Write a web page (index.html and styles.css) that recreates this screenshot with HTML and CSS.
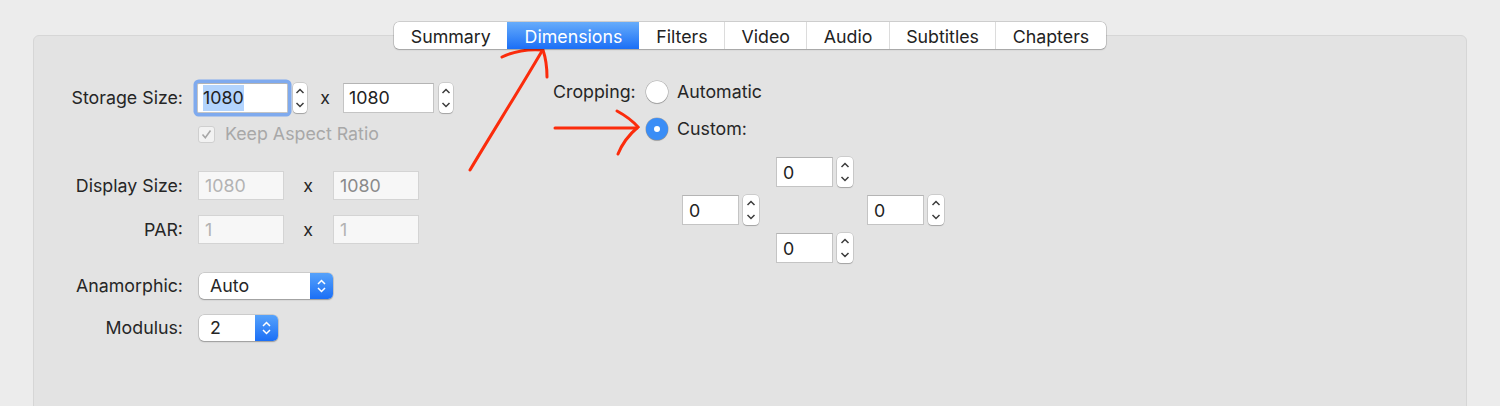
FILE: index.html
```html
<!DOCTYPE html>
<html lang="en">
<head>
    <meta charset="UTF-8">
    <title>Dimensions</title>
    <link rel="stylesheet" href="styles.css">
</head>
<body>

<div id="window">
    <nav class="tabs">
        <span class="tab">Summary</span>
        <span class="tab tab-active">Dimensions</span>
        <span class="tab">Filters</span>
        <span class="tab">Video</span>
        <span class="tab">Audio</span>
        <span class="tab">Subtitles</span>
        <span class="tab">Chapters</span>
    </nav>

    <section class="panel">
        <div class="sizes">
            <div class="row row-storage">
                <span class="label">Storage Size:</span>
                <span class="field field-focus"><span class="selection">1080</span></span>
                <span class="stepper"><svg width="14" height="30" viewBox="0 0 14 30"><path d="M3.5 10 L7 6.5 L10.5 10 M3.5 20 L7 23.5 L10.5 20"/></svg></span>
                <span class="times">x</span>
                <span class="field">1080</span>
                <span class="stepper"><svg width="14" height="30" viewBox="0 0 14 30"><path d="M3.5 10 L7 6.5 L10.5 10 M3.5 20 L7 23.5 L10.5 20"/></svg></span>
            </div>
            <div class="row row-keep">
                <span class="label"></span>
                <span class="checkbox"><svg width="17" height="17" viewBox="0 0 17 17"><path d="M4.5 8.5 L7.3 11.8 L12.5 4.5"/></svg></span>
                <span class="muted">Keep Aspect Ratio</span>
            </div>
            <div class="row row-display">
                <span class="label">Display Size:</span>
                <span class="field field-off">1080</span>
                <span class="times times-wide">x</span>
                <span class="field field-off field-dim">1080</span>
            </div>
            <div class="row row-par">
                <span class="label">PAR:</span>
                <span class="field field-off">1</span>
                <span class="times times-wide">x</span>
                <span class="field field-off">1</span>
            </div>
            <div class="row row-anamorphic">
                <span class="label">Anamorphic:</span>
                <span class="popup">
                    <span class="popup-value">Auto</span>
                    <span class="popup-arrows"><svg width="23" height="26" viewBox="0 0 23 26"><path d="M8 11 L11.5 7.5 L15 11 M8 15 L11.5 18.5 L15 15"/></svg></span>
                </span>
            </div>
            <div class="row row-modulus">
                <span class="label">Modulus:</span>
                <span class="popup popup-small">
                    <span class="popup-value">2</span>
                    <span class="popup-arrows"><svg width="23" height="26" viewBox="0 0 23 26"><path d="M8 11 L11.5 7.5 L15 11 M8 15 L11.5 18.5 L15 15"/></svg></span>
                </span>
            </div>
        </div>

        <div class="cropping">
            <div class="crop-row">
                <span class="crop-label">Cropping:</span>
                <span class="radio"></span>
                <span>Automatic</span>
            </div>
            <div class="crop-row crop-row-custom">
                <span class="crop-label"></span>
                <span class="radio radio-on"></span>
                <span>Custom:</span>
            </div>
            <div class="crop-grid">
                <div class="spin spin-top">
                    <span class="field field-crop">0</span>
                    <span class="stepper stepper-crop"><svg width="16" height="30" viewBox="0 0 16 30"><path d="M4.5 10 L8 6.5 L11.5 10 M4.5 20 L8 23.5 L11.5 20"/></svg></span>
                </div>
                <div class="spin spin-left">
                    <span class="field field-crop">0</span>
                    <span class="stepper stepper-crop"><svg width="16" height="30" viewBox="0 0 16 30"><path d="M4.5 10 L8 6.5 L11.5 10 M4.5 20 L8 23.5 L11.5 20"/></svg></span>
                </div>
                <div class="spin spin-right">
                    <span class="field field-crop">0</span>
                    <span class="stepper stepper-crop"><svg width="16" height="30" viewBox="0 0 16 30"><path d="M4.5 10 L8 6.5 L11.5 10 M4.5 20 L8 23.5 L11.5 20"/></svg></span>
                </div>
                <div class="spin spin-bottom">
                    <span class="field field-crop">0</span>
                    <span class="stepper stepper-crop"><svg width="16" height="30" viewBox="0 0 16 30"><path d="M4.5 10 L8 6.5 L11.5 10 M4.5 20 L8 23.5 L11.5 20"/></svg></span>
                </div>
            </div>
        </div>
    </section>

    <!-- hand-drawn annotation arrows -->
    <svg class="marks" width="1500" height="406" viewBox="0 0 1500 406">
        <path d="M470 170 C 492 133, 518 92, 542 51"/>
        <path d="M502 57 Q 521 48, 543 50 Q 547 62, 547 77"/>
        <path d="M555 128 L 637 128"/>
        <path d="M617 111 Q 630 118, 638 127 Q 624 139, 618 154"/>
    </svg>
</div>

</body>
</html>
```

FILE: styles.css
```css
* {
  box-sizing: border-box;
  margin: 0;
  padding: 0;
}

html, body {
  width: 100%;
  height: 100%;
  overflow: hidden;
  background: #ececec;
  font-family: Inter, "Noto Sans", sans-serif;
  font-size: 17.8px;
  color: #262626;
}

#window {
  position: relative;
  height: 100%;
  overflow: hidden;
  padding-top: 22px;
}

/* Segmented tab control */
.tabs {
  position: relative;
  z-index: 1;
  display: flex;
  width: fit-content;
  height: 27px;
  margin: 0 auto -14px;
  background: #fff;
  border-radius: 5px;
  box-shadow: 0 0 0 0.5px rgba(0, 0, 0, 0.25), 0 1px 1.5px rgba(0, 0, 0, 0.18);
  overflow: hidden;
}

.tab {
  padding: 1px 16.4px 0;
  line-height: 27px;
  color: #222;
  border-left: 1px solid #dcdcdc;
}

.tab:first-child {
  border-left: none;
}

.tab-active {
  color: #fff;
  border-left-color: transparent;
  background: linear-gradient(#66acfb, #1b6ff6);
}

.tab-active + .tab {
  border-left-color: transparent;
}

/* Main panel */
.panel {
  display: flex;
  height: 400px;
  margin: 0 33px;
  background: #e3e3e3;
  border: 1px solid #d6d6d6;
  border-radius: 6px;
}

.sizes {
  width: 519px;
  padding-top: 47px;
}

.row {
  display: flex;
  align-items: center;
  line-height: 1;
}

.label {
  width: 149px;
  margin-right: 14px;
  text-align: right;
}

.row-storage { height: 30px; }
.row-keep { height: 18px; margin-top: 12px; }
.row-display { height: 29px; margin-top: 28px; }
.row-par { height: 29px; margin-top: 15px; }
.row-anamorphic { height: 26px; margin-top: 29px; }
.row-modulus { height: 26px; margin-top: 16px; }

.field {
  display: flex;
  align-items: center;
  width: 91px;
  height: 30px;
  padding-left: 5px;
  background: #fff;
  border: 1px solid #c4c4c4;
  border-top-color: #b4b4b4;
  color: #222;
}

.field-focus {
  border-radius: 2px;
  box-shadow: 0 0 0 3.5px rgba(74, 140, 245, 0.65);
}

.selection {
  background: #b3d4fd;
  line-height: 26px;
}

.field-off {
  width: 86px;
  height: 29px;
  margin-left: 1px;
  padding-left: 6px;
  background: #f7f7f7;
  border-color: #d4d4d4;
  color: #b3b3b3;
}

.field-dim {
  color: #8a8a8a;
}

.stepper {
  display: flex;
  width: 14px;
  height: 30px;
  margin-left: 5px;
  background: #fff;
  border-radius: 4px;
  box-shadow: 0 0 0 0.5px rgba(0, 0, 0, 0.2), 0 1px 1px rgba(0, 0, 0, 0.2);
}

.stepper svg path {
  fill: none;
  stroke: #3c3c3c;
  stroke-width: 1.5;
}

.times {
  width: 36px;
  text-align: center;
}

.times-wide {
  width: 48px;
}

.checkbox {
  display: flex;
  width: 17px;
  height: 17px;
  margin-left: 1px;
  margin-right: 10px;
  background: #f2f2f2;
  border: 1px solid #cfcfcf;
  border-radius: 3px;
}

.checkbox svg {
  margin: -1px;
}

.checkbox path {
  fill: none;
  stroke: #a6a6a6;
  stroke-width: 1.6;
}

.muted {
  color: #a8a8a8;
}

/* Pop-up buttons */
.popup {
  display: flex;
  width: 134px;
  height: 26px;
  margin-left: 2px;
  background: #fff;
  border-radius: 5px;
  box-shadow: 0 0 0 0.5px rgba(0, 0, 0, 0.2), 0 1px 1.5px rgba(0, 0, 0, 0.25);
  overflow: hidden;
}

.popup-small {
  width: 79px;
}

.popup-value {
  flex: 1;
  padding-left: 11px;
  line-height: 25px;
}

.popup-arrows {
  display: flex;
  width: 23px;
  background: linear-gradient(#56a2fb, #1b6ff6);
}

.popup-arrows path {
  fill: none;
  stroke: #fff;
  stroke-width: 1.5;
}

/* Cropping */
.cropping {
  padding-top: 45px;
}

.crop-row {
  display: flex;
  align-items: center;
  height: 22px;
  line-height: 1;
}

.crop-row-custom {
  margin-top: 15px;
}

.crop-label {
  width: 82px;
  margin-right: 11px;
  text-align: right;
}

.radio {
  width: 22px;
  height: 22px;
  margin-right: 9px;
  background: #fff;
  border-radius: 50%;
  box-shadow: 0 0 0 0.5px rgba(0, 0, 0, 0.25), 0 1px 1px rgba(0, 0, 0, 0.18);
}

.radio-on {
  position: relative;
  background: #3a8df6;
}

.radio-on::after {
  content: "";
  position: absolute;
  top: 8px;
  left: 8px;
  width: 6px;
  height: 6px;
  background: #fff;
  border-radius: 50%;
}

.crop-grid {
  display: grid;
  grid-template-columns: 94px 91px auto;
  grid-template-rows: 30px 30px 30px;
  row-gap: 8px;
  margin-top: 17px;
  margin-left: 129px;
}

.spin {
  display: flex;
}

.spin-top { grid-column: 2; grid-row: 1; }
.spin-left { grid-column: 1; grid-row: 2; }
.spin-right { grid-column: 3; grid-row: 2; }
.spin-bottom { grid-column: 2; grid-row: 3; }

.field-crop {
  width: 57px;
  padding-left: 6px;
}

.stepper-crop {
  width: 16px;
  margin-left: 4px;
}

/* Annotation overlay */
.marks {
  position: absolute;
  top: 0;
  left: 0;
  pointer-events: none;
}

.marks path {
  fill: none;
  stroke: #fb2c0c;
  stroke-width: 3;
  stroke-linecap: round;
}
```
